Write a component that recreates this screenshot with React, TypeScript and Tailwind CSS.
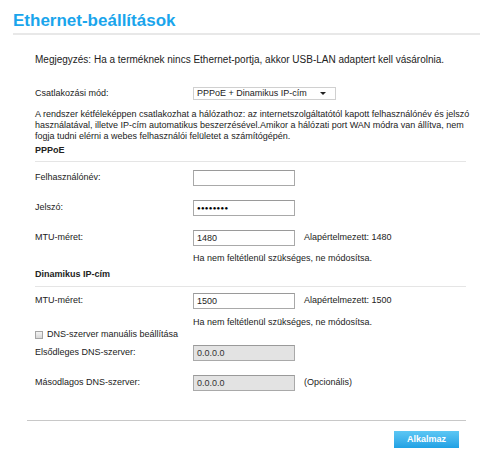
import React from 'react'

function Field({ value, disabled, dots }: { value?: string; disabled?: boolean; dots?: boolean }) {
  return (
    <div
      className={
        'w-[102px] h-[16px] border border-[#a9a9a9] border-t-[#9a9a9a] flex items-center px-[3px] text-[9px] leading-none ' +
        (disabled ? 'bg-[#e3e3e3] text-[#333]' : 'bg-white text-[#222]')
      }
    >
      {dots ? <span className="text-[6px] tracking-[0.3px] text-black">●●●●●●●●</span> : value}
    </div>
  )
}

function Row({ label, value, note, disabled, dots, className }: {
  label: string
  value?: string
  note?: string
  disabled?: boolean
  dots?: boolean
  className?: string
}) {
  return (
    <div className={'flex items-center h-[16px] ' + (className || '')}>
      <div className="w-[158px] text-[9px]">{label}</div>
      <Field value={value} disabled={disabled} dots={dots} />
      {note && <div className="ml-[9px] text-[9px]">{note}</div>}
    </div>
  )
}

export default function App() {
  return (
    <div className="w-[480px] h-[453px] bg-white font-['Liberation_Sans',Arial,sans-serif] text-[#222] overflow-hidden">
      <div className="pl-[13px] pt-[11px]">
        <h1 className="text-[17px] leading-[20px] font-bold text-[#1aa5ec]">Ethernet-beállítások</h1>
        <div className="mt-[2px] h-[2px] bg-[#e8e8e8]" />
      </div>

      <div className="ml-[35px] w-[431px]">
        <p className="mt-[19px] text-[10px] leading-[12px]">
          Megjegyzés: Ha a terméknek nincs Ethernet-portja, akkor USB-LAN adaptert kell vásárolnia.
        </p>

        <div className="mt-[21px] flex items-center h-[13px]">
          <div className="w-[158px] text-[9px]">Csatlakozási mód:</div>
          <div className="w-[143px] h-[13px] border border-[#d0d0d0] bg-white flex items-center justify-between pl-[3px] pr-[9px] text-[9px] leading-none">
            <span>PPPoE + Dinamikus IP-cím</span>
            <span className="w-0 h-0 border-l-[3px] border-r-[3px] border-t-[3px] border-l-transparent border-r-transparent border-t-[#222]" />
          </div>
        </div>

        <p className="mt-[9px] text-[9px] leading-[11px] whitespace-nowrap">
          A rendszer kétféleképpen csatlakozhat a hálózathoz: az internetszolgáltatótól kapott felhasználónév és jelszó
          <br />
          használatával, illetve IP-cím automatikus beszerzésével.Amikor a hálózati port WAN módra van állítva, nem
          <br />
          fogja tudni elérni a webes felhasználói felületet a számítógépén.
        </p>

        <div className="mt-[3px] text-[9px] leading-[11px] font-bold">PPPoE</div>
        <div className="mt-[5px] h-px bg-[#e5e5e5]" />

        <Row className="mt-[8px]" label="Felhasználónév:" value="" />
        <Row className="mt-[14px]" label="Jelszó:" dots />
        <Row className="mt-[14px]" label="MTU-méret:" value="1480" note="Alapértelmezett: 1480" />
        <div className="mt-[7px] ml-[158px] text-[9px] leading-[11px]">Ha nem feltétlenül szükséges, ne módosítsa.</div>

        <div className="mt-[5px] text-[9px] leading-[11px] font-bold">Dinamikus IP-cím</div>
        <div className="mt-[6px] h-px bg-[#e5e5e5]" />

        <Row className="mt-[6px]" label="MTU-méret:" value="1500" note="Alapértelmezett: 1500" />
        <div className="mt-[8px] ml-[158px] text-[9px] leading-[11px]">Ha nem feltétlenül szükséges, ne módosítsa.</div>

        <div className="flex items-center h-[11px] mt-px">
          <span className="w-[8px] h-[8px] border border-[#a5a5a5] bg-gradient-to-b from-[#f4f4f4] to-[#d8d8d8]" />
          <span className="ml-[4px] text-[9px]">DNS-szerver manuális beállítása</span>
        </div>

        <Row className="mt-[5px]" label="Elsődleges DNS-szerver:" value="0.0.0.0" disabled />
        <Row className="mt-[14px]" label="Másodlagos DNS-szerver:" value="0.0.0.0" note="(Opcionális)" disabled />
      </div>

      <div className="ml-[27px] w-[439px]">
        <div className="mt-[29px] h-px bg-[#c8c8c8]" />
        <div className="flex justify-end mt-[10px] pr-[7px]">
          <button className="w-[65px] h-[17px] bg-gradient-to-b from-[#5cc7f4] to-[#1ea1e4] text-white text-[9px] font-bold">
            Alkalmaz
          </button>
        </div>
      </div>
    </div>
  )
}
